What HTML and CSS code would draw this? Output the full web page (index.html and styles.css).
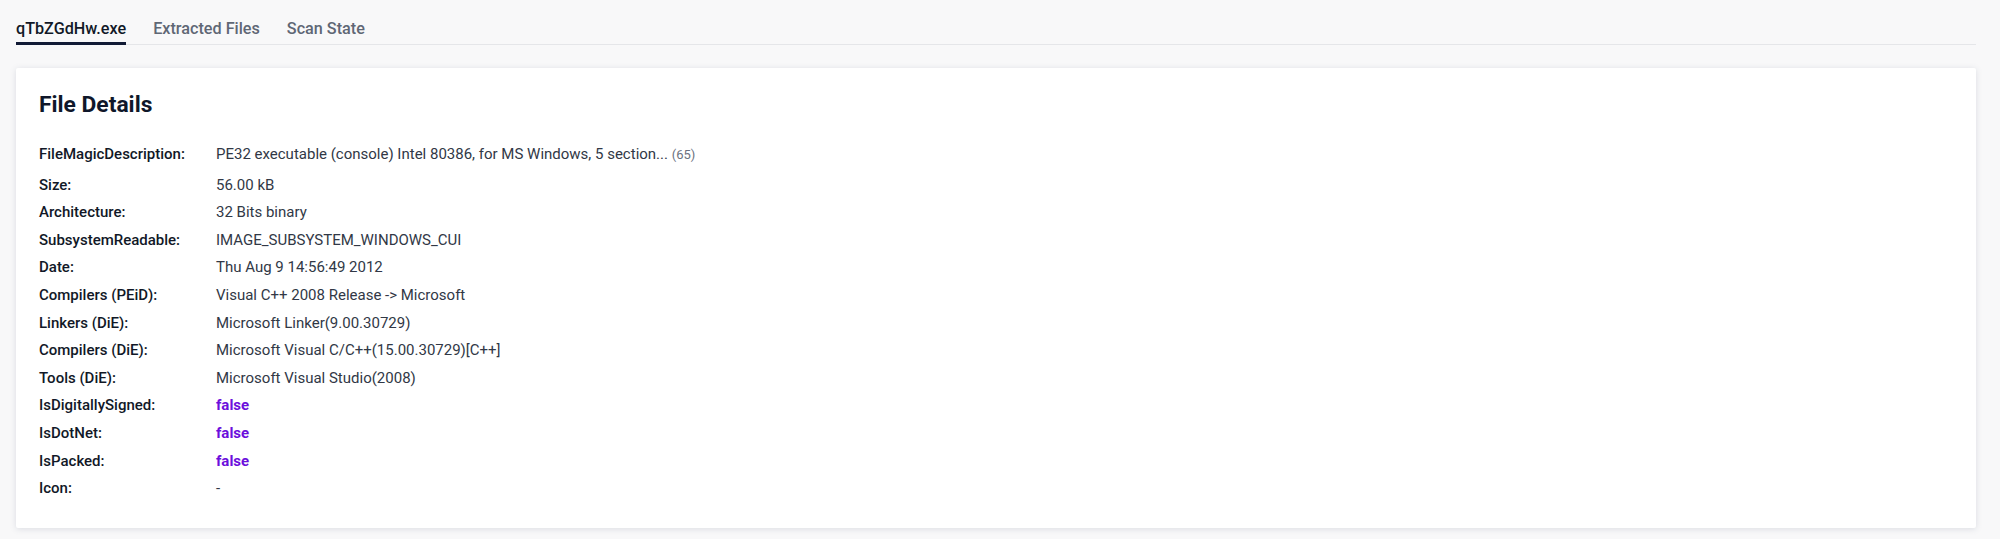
FILE: index.html
```
<!DOCTYPE html>
<html lang="en">
<head>
    <meta charset="UTF-8">
    <meta name="viewport" content="width=device-width, initial-scale=1.0">
    <title>qTbZGdHw.exe - File Details</title>
    <link rel="stylesheet" href="styles.css">
</head>
<body>
    <div class="page">
        <!-- tabs -->
        <nav class="tabs">
            <a class="tab active" href="#">qTbZGdHw.exe</a>
            <a class="tab" href="#">Extracted Files</a>
            <a class="tab" href="#">Scan State</a>
        </nav>

        <div class="card">
            <h2 class="card-title">File Details</h2>
            <div class="details">
                <div class="row first">
                    <div class="label">FileMagicDescription:</div>
                    <div class="value">PE32 executable (console) Intel 80386, for MS Windows, 5 section... <span class="more">(65)</span></div>
                </div>
                <div class="row">
                    <div class="label">Size:</div>
                    <div class="value">56.00 kB</div>
                </div>
                <div class="row">
                    <div class="label">Architecture:</div>
                    <div class="value">32 Bits binary</div>
                </div>
                <div class="row">
                    <div class="label">SubsystemReadable:</div>
                    <div class="value">IMAGE_SUBSYSTEM_WINDOWS_CUI</div>
                </div>
                <div class="row">
                    <div class="label">Date:</div>
                    <div class="value">Thu Aug 9 14:56:49 2012</div>
                </div>
                <div class="row">
                    <div class="label">Compilers (PEiD):</div>
                    <div class="value">Visual C++ 2008 Release -&gt; Microsoft</div>
                </div>
                <div class="row">
                    <div class="label">Linkers (DiE):</div>
                    <div class="value">Microsoft Linker(9.00.30729)</div>
                </div>
                <div class="row">
                    <div class="label">Compilers (DiE):</div>
                    <div class="value">Microsoft Visual C/C++(15.00.30729)[C++]</div>
                </div>
                <div class="row">
                    <div class="label">Tools (DiE):</div>
                    <div class="value">Microsoft Visual Studio(2008)</div>
                </div>
                <div class="row">
                    <div class="label">IsDigitallySigned:</div>
                    <div class="value bool">false</div>
                </div>
                <div class="row">
                    <div class="label">IsDotNet:</div>
                    <div class="value bool">false</div>
                </div>
                <div class="row">
                    <div class="label">IsPacked:</div>
                    <div class="value bool">false</div>
                </div>
                <div class="row">
                    <div class="label">Icon:</div>
                    <div class="value">-</div>
                </div>
            </div>
        </div>
    </div>
</body>
</html>
```

FILE: styles.css
```
body {
    margin: 0;
    padding: 0;
    background-color: #f8f8f9;
    font-family: Roboto, "Liberation Sans", sans-serif;
    color: #111827;
}

.page {
    padding: 18px 24px 12px 16px;
}

/* tabs */
.tabs {
    display: flex;
    gap: 27px;
    border-bottom: 1px solid #e5e6e9;
}

.tab {
    font-size: 16.2px;
    line-height: 22px;
    font-weight: 500;
    color: #5f6775;
    text-decoration: none;
    padding-bottom: 2px;
    border-bottom: 3px solid transparent;
    margin-bottom: -1px;
}

.tab.active {
    color: #111827;
    border-bottom-color: #111a35;
}

/* card */
.card {
    margin-top: 23px;
    background-color: #ffffff;
    border-radius: 2px;
    box-shadow: 0 1px 6px rgba(90, 100, 130, 0.18);
    padding: 22px 23px 25px 23px;
}

.card-title {
    margin: 0 0 21px 0;
    font-size: 22.8px;
    line-height: 29px;
    font-weight: 700;
    color: #0f172a;
}

.row {
    display: flex;
    font-size: 15px;
    line-height: 19.6px;
    padding: 4px 0;
}

.row.first {
    padding: 5px 0 7px 0;
}

.label {
    width: 177px;
    flex-shrink: 0;
    font-weight: 500;
    color: #111827;
}

.value {
    color: #313846;
}

.value.bool {
    color: #6c0fdc;
    font-weight: 700;
}

.more {
    font-size: 13px;
    color: #6b7280;
}
```
